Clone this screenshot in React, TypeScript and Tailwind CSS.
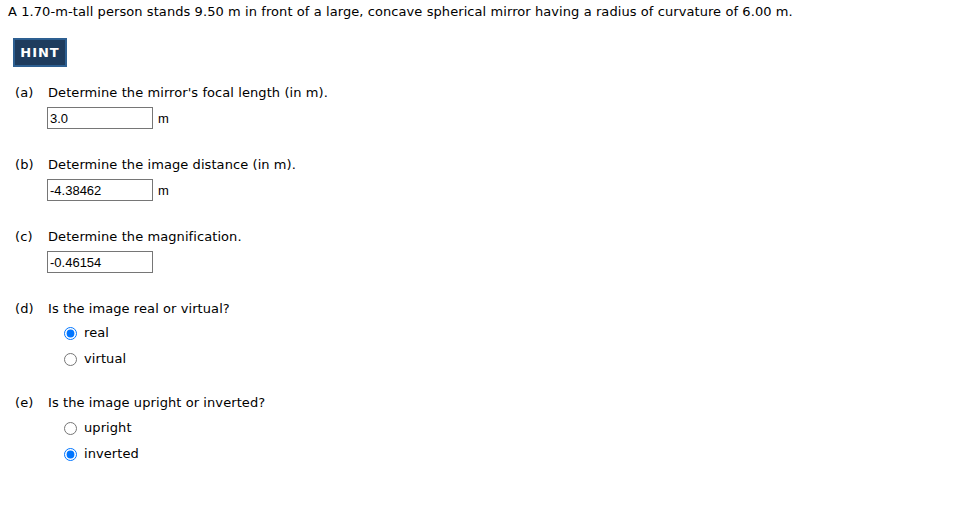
import React from "react";

const font = { fontFamily: '"DejaVu Sans", Verdana, sans-serif' };
const arial = { fontFamily: '"Liberation Sans", Arial, sans-serif' };

function Label({ l, text }: { l: string; text: string }) {
  return (
    <div className="flex h-4 items-center pl-[15px] text-[13px] leading-4 tracking-[0.08px] text-black">
      <span className="w-[33px] shrink-0">{l}</span>
      <span>{text}</span>
    </div>
  );
}

function Field({ value, unit }: { value: string; unit?: string }) {
  return (
    <div className="mt-[6px] flex items-center pl-[47px]">
      <input
        readOnly
        value={value}
        className="h-[22px] w-[106px] border border-[#767676] bg-white px-[2px] text-[13px] text-black outline-none"
        style={arial}
      />
      {unit && (
        <span className="ml-[5px] mt-[2px] text-[13px] text-black" style={arial}>
          {unit}
        </span>
      )}
    </div>
  );
}

function Radio({ label, checked, name }: { label: string; checked: boolean; name: string }) {
  return (
    <label className="flex h-5 items-center pl-[59px] text-[13px] tracking-[0.08px] text-black">
      <input
        type="radio"
        name={name}
        readOnly
        checked={checked}
        className="m-0 ml-[5px] mr-[7px] h-[13px] w-[13px] accent-[#0075ff]"
      />
      <span>{label}</span>
    </label>
  );
}

export default function App() {
  return (
    <div className="min-h-[508px] w-[976px] bg-white" style={font}>
      <div className="px-2 pt-1 text-[13px] leading-4 tracking-[0.08px] text-black">
        A 1.70-m-tall person stands 9.50 m in front of a large, concave spherical mirror having a radius of curvature of 6.00 m.
      </div>
      <div className="mt-[18px] pl-[13px]">
        <button
          className="flex h-[29px] w-[54px] items-center justify-center border-2 border-[#2d5f91] bg-[#1e3c5e] text-[13px] font-bold tracking-[1px] text-white"
          style={font}
        >
          HINT
        </button>
      </div>
      <div className="mt-[18px]">
        <Label l="(a)" text="Determine the mirror's focal length (in m)." />
        <Field value="3.0" unit="m" />
      </div>
      <div className="mt-[28px]">
        <Label l="(b)" text="Determine the image distance (in m)." />
        <Field value="-4.38462" unit="m" />
      </div>
      <div className="mt-[28px]">
        <Label l="(c)" text="Determine the magnification." />
        <Field value="-0.46154" />
      </div>
      <div className="mt-[28px]">
        <Label l="(d)" text="Is the image real or virtual?" />
        <div className="mt-[6px] flex flex-col gap-[6px]">
          <Radio name="d" label="real" checked />
          <Radio name="d" label="virtual" checked={false} />
        </div>
      </div>
      <div className="mt-[26px]">
        <Label l="(e)" text="Is the image upright or inverted?" />
        <div className="mt-[7px] flex flex-col gap-[6px]">
          <Radio name="e" label="upright" checked={false} />
          <Radio name="e" label="inverted" checked />
        </div>
      </div>
    </div>
  );
}
